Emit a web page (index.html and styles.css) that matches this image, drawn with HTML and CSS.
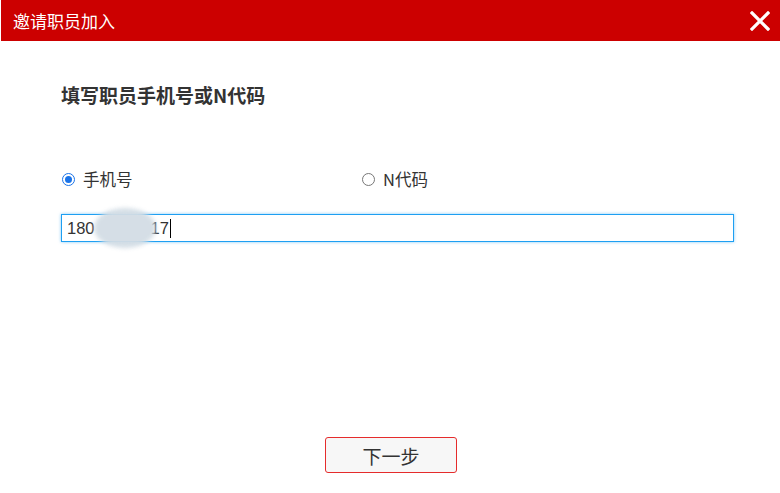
FILE: index.html
```html
<!DOCTYPE html>
<html lang="zh">
<head>
<meta charset="UTF-8">
<meta name="viewport" content="width=device-width, initial-scale=1.0">
<title>邀请职员加入</title>
<link rel="stylesheet" href="styles.css">
</head>
<body>
<div class="dialog">
  <div class="header">
    <span class="title">邀请职员加入</span>
    <span class="close">
      <svg width="20" height="20" viewBox="0 0 20 20"><path d="M2 2 L18 18 M18 2 L2 18" stroke="#fff" stroke-width="3.2" stroke-linecap="square"/></svg>
    </span>
  </div>

  <div class="content">
    <div class="heading">填写职员手机号或N代码</div>

    <div class="options">
      <label class="opt"><span class="radio checked"></span>手机号</label>
      <label class="opt"><span class="radio"></span>N代码</label>
    </div>

    <div class="field">
      <span class="val">180<span class="hidden"></span>17</span><span class="caret"></span>
      <span class="blur"></span>
    </div>
  </div>

  <div class="footer">
    <button class="next">下一步</button>
  </div>
</div>
</body>
</html>
```

FILE: styles.css
```css
body { margin: 0; background: #fff; font-family: "Microsoft YaHei", "Noto Sans CJK SC", "Liberation Sans", sans-serif; color: #333; }
.dialog { width: 780px; height: 493px; display: flex; flex-direction: column; }
.header { height: 41px; background: #cc0000; margin-left: 1px; display: flex; align-items: center; justify-content: space-between; padding: 0 10px 0 12px; }
.title { color: #fff; font-size: 17px; }
.close { width: 20px; height: 20px; display: flex; }
.content { padding: 0 46px 0 61px; flex: 1; }
.heading { font-size: 19px; font-weight: bold; margin-top: 42px; line-height: 24px; color: #333; }
.options { display: flex; margin-top: 60px; height: 24px; align-items: center; }
.opt { display: flex; align-items: center; font-size: 16.5px; color: #333; width: 300px; }
.radio { width: 11px; height: 11px; border: 1.5px solid #777; border-radius: 50%; margin-right: 8px; margin-left: 1px; position: relative; }
.radio.checked { border-color: #1a73e8; }
.radio.checked::after { content: ""; position: absolute; left: 2px; top: 2px; width: 7px; height: 7px; border-radius: 50%; background: #1a73e8; }
.field { position: relative; margin-top: 23px; height: 26px; border: 1px solid #1e9ff2; box-shadow: 0 0 3px rgba(30,159,242,0.55); display: flex; align-items: center; padding-left: 5px; font-size: 16.5px; }
.val { color: #333; font-family: "Liberation Sans", "Noto Sans CJK SC", sans-serif; display: flex; align-items: center; }
.hidden { display: inline-block; width: 56px; }
.caret { width: 1px; height: 19px; background: #000; margin-left: 1px; }
.blur { position: absolute; left: 32px; top: -7px; width: 62px; height: 40px; border-radius: 50%; background: #d3dde5; filter: blur(2px); opacity: 0.95; }
.footer { display: flex; justify-content: center; padding-bottom: 20px; padding-left: 2px; }
.next { width: 132px; height: 36px; border: 1px solid #e52c2c; border-radius: 3px; background: #f7f7f7; font-size: 19px; color: #333; font-family: inherit; }
```
